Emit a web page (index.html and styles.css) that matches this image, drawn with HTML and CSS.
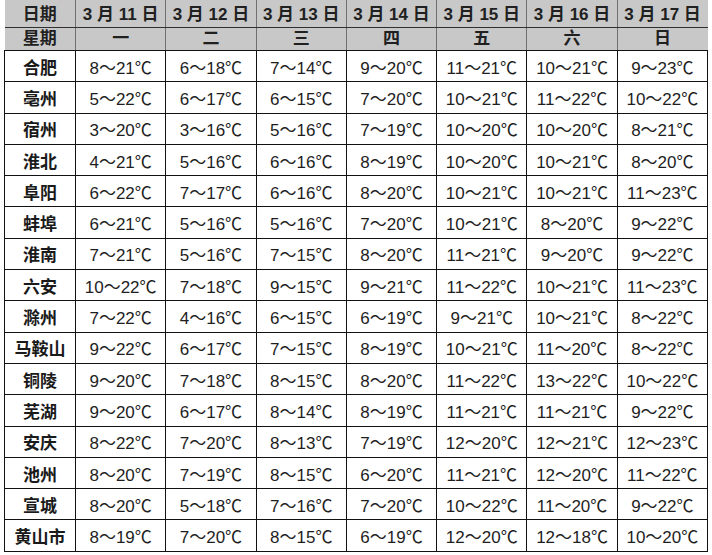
FILE: index.html
```html
<!DOCTYPE html>
<html lang="zh">
<head>
<meta charset="utf-8">
<link rel="stylesheet" href="styles.css">
</head>
<body>
<table class="wx">
  <colgroup>
    <col class="c-city">
    <col><col><col><col><col><col><col>
  </colgroup>
  <thead>
    <tr class="h1">
      <th>日期</th><th>3 月 11 日</th><th>3 月 12 日</th><th>3 月 13 日</th><th>3 月 14 日</th><th>3 月 15 日</th><th>3 月 16 日</th><th>3 月 17 日</th>
    </tr>
    <tr class="h2">
      <th>星期</th><th>一</th><th>二</th><th>三</th><th>四</th><th>五</th><th>六</th><th>日</th>
    </tr>
  </thead>
  <tbody>
    <tr><th>合肥</th><td>8～21℃</td><td>6～18℃</td><td>7～14℃</td><td>9～20℃</td><td>11～21℃</td><td>10～21℃</td><td>9～23℃</td></tr>
    <tr><th>亳州</th><td>5～22℃</td><td>6～17℃</td><td>6～15℃</td><td>7～20℃</td><td>10～21℃</td><td>11～22℃</td><td>10～22℃</td></tr>
    <tr><th>宿州</th><td>3～20℃</td><td>3～16℃</td><td>5～16℃</td><td>7～19℃</td><td>10～20℃</td><td>10～20℃</td><td>8～21℃</td></tr>
    <tr><th>淮北</th><td>4～21℃</td><td>5～16℃</td><td>6～16℃</td><td>8～19℃</td><td>10～20℃</td><td>10～21℃</td><td>8～20℃</td></tr>
    <tr><th>阜阳</th><td>6～22℃</td><td>7～17℃</td><td>6～16℃</td><td>8～20℃</td><td>10～21℃</td><td>10～21℃</td><td>11～23℃</td></tr>
    <tr><th>蚌埠</th><td>6～21℃</td><td>5～16℃</td><td>5～16℃</td><td>7～20℃</td><td>10～21℃</td><td>8～20℃</td><td>9～22℃</td></tr>
    <tr><th>淮南</th><td>7～21℃</td><td>5～16℃</td><td>7～15℃</td><td>8～20℃</td><td>11～21℃</td><td>9～20℃</td><td>9～22℃</td></tr>
    <tr><th>六安</th><td>10～22℃</td><td>7～18℃</td><td>9～15℃</td><td>9～21℃</td><td>11～22℃</td><td>10～21℃</td><td>11～23℃</td></tr>
    <tr><th>滁州</th><td>7～22℃</td><td>4～16℃</td><td>6～15℃</td><td>6～19℃</td><td>9～21℃</td><td>10～21℃</td><td>8～22℃</td></tr>
    <tr><th>马鞍山</th><td>9～22℃</td><td>6～17℃</td><td>7～15℃</td><td>8～19℃</td><td>10～21℃</td><td>11～20℃</td><td>8～22℃</td></tr>
    <tr><th>铜陵</th><td>9～20℃</td><td>7～18℃</td><td>8～15℃</td><td>8～20℃</td><td>11～22℃</td><td>13～22℃</td><td>10～22℃</td></tr>
    <tr><th>芜湖</th><td>9～20℃</td><td>6～17℃</td><td>8～14℃</td><td>8～19℃</td><td>11～21℃</td><td>11～21℃</td><td>9～22℃</td></tr>
    <tr><th>安庆</th><td>8～22℃</td><td>7～20℃</td><td>8～13℃</td><td>7～19℃</td><td>12～20℃</td><td>12～21℃</td><td>12～23℃</td></tr>
    <tr><th>池州</th><td>8～20℃</td><td>7～19℃</td><td>8～15℃</td><td>6～20℃</td><td>11～21℃</td><td>12～20℃</td><td>11～22℃</td></tr>
    <tr><th>宣城</th><td>8～20℃</td><td>5～18℃</td><td>7～16℃</td><td>7～20℃</td><td>10～22℃</td><td>11～20℃</td><td>9～22℃</td></tr>
    <tr><th>黄山市</th><td>8～19℃</td><td>7～20℃</td><td>8～15℃</td><td>6～19℃</td><td>12～20℃</td><td>12～18℃</td><td>10～20℃</td></tr>
  </tbody>
</table>
</body>
</html>
```

FILE: styles.css
```css
html, body {
  margin: 0;
  padding: 0;
  background: #ffffff;
}

.wx {
  margin-left: 4px;
  width: 704px;
  table-layout: fixed;
  border-collapse: collapse;
  font-family: "Liberation Sans", "Noto Sans CJK SC", sans-serif;
  color: #1e1e1e;
}

.c-city {
  width: 71px;
}

.wx th,
.wx td {
  padding: 0;
  text-align: center;
  vertical-align: middle;
  white-space: nowrap;
  overflow: hidden;
}

.wx thead th {
  background: #c8c8c8;
  font-family: "Liberation Sans", "Noto Sans CJK SC", sans-serif;
  font-weight: bold;
  font-size: 17px;
  line-height: 18px;
  color: #202020;
  border-left: 1px solid #707070;
  border-right: 1px solid #707070;
}

.wx thead th:first-child {
  border-left: none;
}

.wx thead th:last-child {
  border-right: none;
}

.wx .h1 th {
  height: 24px;
  padding-top: 3px;
  box-sizing: content-box;
  border-bottom: 1px solid #303030;
}

.wx .h2 th {
  height: 22px;
  box-sizing: content-box;
  border-bottom: 1px solid #111;
}

.wx tbody th,
.wx tbody td {
  height: 31.3px;
  box-sizing: border-box;
  border: 1px solid #111;
}

.wx tbody th {
  font-family: "Noto Sans CJK SC", sans-serif;
  font-weight: bold;
  font-size: 17px;
  color: #1a1a1a;
}

.wx tbody td {
  font-size: 17px;
  font-weight: normal;
}
```
